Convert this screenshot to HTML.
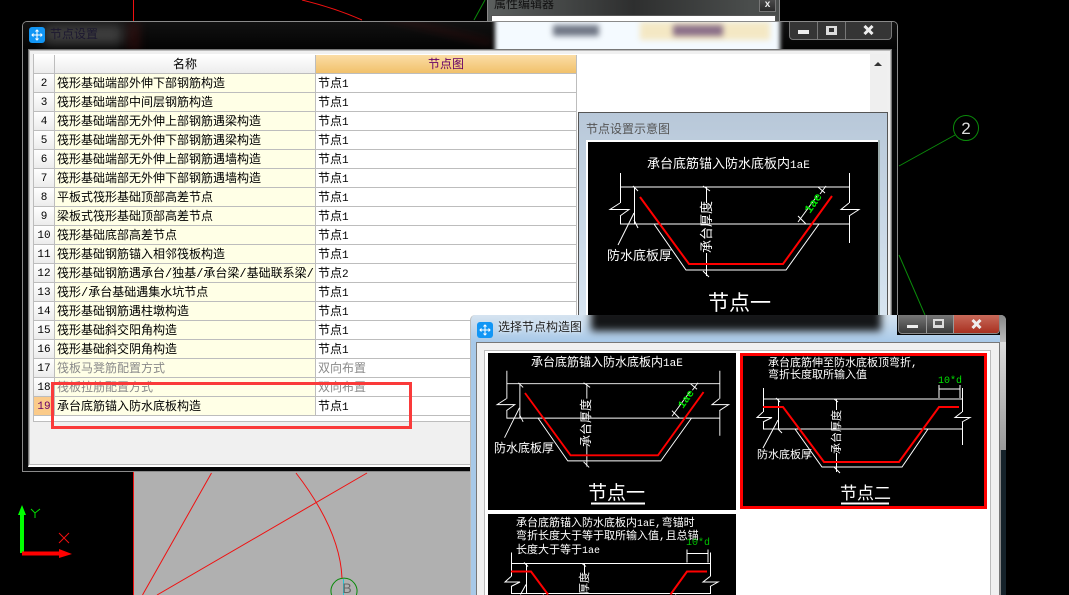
<!DOCTYPE html>
<html><head><meta charset="utf-8">
<style>
html,body{margin:0;padding:0;background:#000;width:1069px;height:595px;overflow:hidden}
#p{position:relative;width:1069px;height:595px;overflow:hidden;background:#000;font:12px/18px "Liberation Mono","WenQuanYi Zen Hei","Noto Sans CJK SC",monospace;color:#000}
.a{position:absolute;box-sizing:border-box}
table{border-collapse:separate;border-spacing:0;table-layout:fixed;font-size:12px}
td{height:19px;box-sizing:border-box;padding:2px 2px 0;border-right:1px solid #bdbdbd;border-bottom:1px solid #bdbdbd;white-space:nowrap;overflow:hidden;line-height:16px;background:#fff;font-family:"Liberation Mono","WenQuanYi Zen Hei","Noto Sans CJK SC",monospace}
td:first-child{text-align:center;background:linear-gradient(#fff,#ececec);padding:2px 0 0;font-size:11px}
td:nth-child(2){background:#ffffe6}
tr.g td:nth-child(n+2){color:#8a8a8a}
i{font:11px/10px "Liberation Mono",monospace}
.h td{text-align:center;background:linear-gradient(#fff,#ececec)!important}
.h td:last-child{background:linear-gradient(#fbdda6,#f1c16b)!important;color:#660066}
svg text{font-family:"Liberation Mono","WenQuanYi Zen Hei","Noto Sans CJK SC",monospace;fill:#fff}
.ic{width:16px;height:16px;border-radius:3px;background:#1296f5}
.btn{background:linear-gradient(#4a4a4a,#2a2a2a);border:1px solid #777;border-top:0}
</style></head><body><div id="p">

<svg class="a" style="left:0;top:0" width="1069" height="595" viewBox="0 0 1069 595">
<rect x="134" y="472" width="340" height="123" fill="#b0b0b0"/>
<g fill="none" stroke="#f01010" stroke-width="1">
<path d="M133.500 0V21M133.500 472V595"/>
<path d="M302 0Q335 8 362 20"/>
<path d="M296 473Q340 530 342 578"/>
<path d="M211.500 473L142.500 595M367 473L157 595"/>
</g>
<path d="M485 0L474 20" stroke="#0a8a0a"/>
<path d="M899 166L955 135M899 255L925 315" stroke="#0a8a0a" fill="none"/>
<circle cx="966" cy="128" r="12.500" fill="none" stroke="#0a8a0a"/>
<text x="966" y="134" font-size="17" text-anchor="middle" style="fill:#ddd;font-family:'Liberation Sans',sans-serif">2</text>
<path d="M331.600 595A13 13 0 1 1 356.400 595" fill="none" stroke="#0a8a0a"/>
<path d="M343.500 579V595" stroke="#20c8d8"/>
<text x="347" y="593" font-size="14" text-anchor="middle" style="fill:#666;font-family:'Liberation Sans',sans-serif">B</text>
<path d="M22 553V513" stroke="#00ff00" stroke-width="4"/>
<path d="M18 515L22 505L26 515Z" fill="#00ff00"/>
<path d="M22 553.500H62" stroke="#ff0000" stroke-width="4"/>
<path d="M59 549L72 554L59 558Z" fill="#ff0000"/>
<path d="M31 509L35 513L40 509M35 513V518" stroke="#00e000" fill="none"/>
<path d="M59 533L69 543M69 533L59 543" stroke="#f01010"/>
</svg>

<!-- attribute editor behind -->
<div class="a" style="left:487px;top:0;width:293px;height:22px;overflow:hidden;background:linear-gradient(90deg,#5b5f5e,#2e2f2f 50%,#4a4d4c 90%);border-left:1px solid #888;border-right:1px solid #888">
<div class="a" style="left:6px;top:-4px;color:#111;white-space:nowrap;font-size:12px">属性编辑器</div>
<div class="a btn" style="left:271px;top:0;width:17px;height:12px;color:#eee;text-align:center;font:bold 10px/10px 'Liberation Sans',sans-serif">x</div>
<div class="a" style="left:3px;top:15px;width:285px;height:7px;background:#fff;border:1px solid #555"></div>
</div>

<!-- main window -->
<div class="a" style="left:22px;top:21px;width:876px;height:451px;background:#060708;border:1px solid #8a8a8a;border-radius:5px 5px 0 0;overflow:hidden">
 <div class="a" style="left:0;top:0;width:874px;height:27px;overflow:hidden;background:linear-gradient(#111,#030303)">
  <div class="a" style="left:20px;top:3px;width:80px;height:20px;background:rgba(255,255,255,.22);filter:blur(6px)"></div>
  <div class="a" style="left:106px;top:0;width:10px;height:30px;background:rgba(170,30,30,.22);filter:blur(5px)"></div>
  <div class="a" style="left:360px;top:5px;width:110px;height:5px;background:rgba(160,30,30,.18);filter:blur(4px);transform:rotate(14deg)"></div>
  <div class="a" style="left:472px;top:-8px;width:285px;height:50px;background:#f4faff;filter:blur(2px)"></div>
  <div class="a" style="left:617px;top:0;width:130px;height:18px;background:#f4e8c4;filter:blur(3px)"></div>
  <div class="a" style="left:530px;top:3px;width:46px;height:11px;background:#6f7685;filter:blur(3px)"></div>
  <div class="a" style="left:650px;top:3px;width:50px;height:11px;background:#8a6f88;filter:blur(3px)"></div>
 </div>
 <div class="a ic" style="left:6px;top:5px"></div>
 <svg class="a" style="left:6px;top:5px" width="16" height="16"><path d="M8 3V13M3 8H13M6.500 4.500L8 3L9.500 4.500M6.500 11.500L8 13L9.500 11.500M4.500 6.500L3 8L4.500 9.500M11.500 6.500L13 8L11.500 9.500" stroke="#fff" fill="none"/></svg>
 <div class="a" style="left:27px;top:4px;color:#1c1830;white-space:nowrap">节点设置</div>
 <!-- title buttons -->
 <div class="a" style="left:766px;top:-1px;width:103px;height:19px;background:#353535;border:1px solid #777;border-top:0;border-radius:0 0 4px 4px">
  <div class="a" style="left:27px;top:0;width:1px;height:18px;background:#777"></div>
  <div class="a" style="left:55px;top:0;width:1px;height:18px;background:#777"></div>
  <div class="a" style="left:8px;top:9px;width:11px;height:4px;background:#eee"></div>
  <div class="a" style="left:36px;top:5px;width:11px;height:9px;border:2px solid #ddd;border-width:2px 3px 3px;background:#333"></div>
  <svg class="a" style="left:73px;top:4px" width="11" height="10"><path d="M1.500 1L9.500 9M9.500 1L1.500 9" stroke="#eee" stroke-width="3" fill="none"/></svg>
 </div>
 <!-- client -->
 <div class="a" style="left:5px;top:27px;width:864px;height:418px;background:#f0f0f0;border:1px solid #777;border-bottom:2px solid #fff;box-shadow:0 0 0 1px #bbb inset">
  <div class="a" style="left:4px;top:4px;width:854px;height:368px;background:#fff;border:1px solid #bdbdbd;border-top:0"></div>
  <div class="a" style="left:841px;top:4px;width:17px;height:260px;background:#efefef"></div>
  <div class="a" style="left:845px;top:12px;width:0;height:0;border:4px solid transparent;border-bottom:4px solid #333;border-top:0"></div>
  <table class="a" style="left:5px;top:5px;width:543px">
   <colgroup><col style="width:21px"><col style="width:261px"><col style="width:261px"></colgroup>
   <tr class="h"><td></td><td>名称</td><td>节点图</td></tr>
   <tr><td>2</td><td>筏形基础端部外伸下部钢筋构造</td><td>节点<i>1</i></td></tr>
   <tr><td>3</td><td>筏形基础端部中间层钢筋构造</td><td>节点<i>1</i></td></tr>
   <tr><td>4</td><td>筏形基础端部无外伸上部钢筋遇梁构造</td><td>节点<i>1</i></td></tr>
   <tr><td>5</td><td>筏形基础端部无外伸下部钢筋遇梁构造</td><td>节点<i>1</i></td></tr>
   <tr><td>6</td><td>筏形基础端部无外伸上部钢筋遇墙构造</td><td>节点<i>1</i></td></tr>
   <tr><td>7</td><td>筏形基础端部无外伸下部钢筋遇墙构造</td><td>节点<i>1</i></td></tr>
   <tr><td>8</td><td>平板式筏形基础顶部高差节点</td><td>节点<i>1</i></td></tr>
   <tr><td>9</td><td>梁板式筏形基础顶部高差节点</td><td>节点<i>1</i></td></tr>
   <tr><td>10</td><td>筏形基础底部高差节点</td><td>节点<i>1</i></td></tr>
   <tr><td>11</td><td>筏形基础钢筋锚入相邻筏板构造</td><td>节点<i>1</i></td></tr>
   <tr><td>12</td><td>筏形基础钢筋遇承台/独基/承台梁/基础联系梁/</td><td>节点<i>2</i></td></tr>
   <tr><td>13</td><td>筏形/承台基础遇集水坑节点</td><td>节点<i>1</i></td></tr>
   <tr><td>14</td><td>筏形基础钢筋遇柱墩构造</td><td>节点<i>1</i></td></tr>
   <tr><td>15</td><td>筏形基础斜交阳角构造</td><td>节点<i>1</i></td></tr>
   <tr><td>16</td><td>筏形基础斜交阴角构造</td><td>节点<i>1</i></td></tr>
   <tr class="g"><td>17</td><td>筏板马凳筋配置方式</td><td>双向布置</td></tr>
   <tr class="g"><td>18</td><td>筏板拉筋配置方式</td><td>双向布置</td></tr>
   <tr><td style="background:#fbcb8a;color:#660066">19</td><td>承台底筋锚入防水底板构造</td><td>节点<i>1</i></td></tr>
  </table>
 </div>
</div>

<!-- sketch window -->
<div class="a" style="left:578px;top:112px;width:310px;height:204px;background:linear-gradient(#b8c8d9,#d8e5f1);border:1px solid #555;border-bottom:0">
 <div class="a" style="left:7px;top:8px;color:#555;white-space:nowrap">节点设置示意图</div>
 <div class="a" style="left:7px;top:27px;width:292px;height:177px;background:#000;border:2px solid #fff;border-width:2px 0 0 2px;box-shadow:2px 0 0 #9aa"></div>
</div>

<!-- red annotation -->
<div class="a" style="left:51px;top:382px;width:361px;height:47px;border:3px solid #fa3a3a"></div>

<!-- front window -->
<div class="a" style="left:470px;top:315px;width:536px;height:280px;background:linear-gradient(#d6e4f0,#a8c9e8 27px);border-left:1px solid #bbb;border-radius:5px 5px 0 0;overflow:hidden">
 <div class="a" style="left:120px;top:-8px;width:290px;height:24px;background:rgba(0,0,0,.9);filter:blur(4px)"></div>
 <div class="a" style="left:426px;top:0;width:104px;height:20px;background:#050505"></div>
 <div class="a" style="left:529px;top:0;width:6px;height:27px;background:linear-gradient(#888,#bbb)"></div>
 <div class="a ic" style="left:6px;top:7px"></div>
 <svg class="a" style="left:6px;top:7px" width="16" height="16"><path d="M8 3V13M3 8H13M6.500 4.500L8 3L9.500 4.500M6.500 11.500L8 13L9.500 11.500M4.500 6.500L3 8L4.500 9.500M11.500 6.500L13 8L11.500 9.500" stroke="#fff" fill="none"/></svg>
 <div class="a" style="left:27px;top:4px;color:#222;white-space:nowrap;text-shadow:0 0 4px #fff">选择节点构造图</div>
 <div class="a" style="left:427px;top:0;width:102px;height:19px;background:linear-gradient(#777,#3a3a3a);border:1px solid #888;border-top:0;border-radius:0 0 4px 4px;overflow:hidden">
  <div class="a" style="left:27px;top:0;width:1px;height:18px;background:#999"></div>
  <div class="a" style="left:54px;top:0;width:47px;height:18px;background:linear-gradient(#c86a5a,#a83020);border-left:1px solid #999"></div>
  <div class="a" style="left:8px;top:10px;width:11px;height:3px;background:#eee"></div>
  <div class="a" style="left:34px;top:4px;width:11px;height:9px;border:2px solid #ddd;border-bottom-width:3px"></div>
  <svg class="a" style="left:72px;top:4px" width="11" height="10"><path d="M1.500 1L9.500 9M9.500 1L1.500 9" stroke="#eee" stroke-width="3" fill="none"/></svg>
 </div>
 <div class="a" style="left:5px;top:27px;width:524px;height:253px;background:#f0f0f0;border:1px solid #777;border-bottom:0"></div>
 <div class="a" style="left:13px;top:35px;width:507px;height:245px;background:#fff;border:1px solid #bbb;border-bottom:0"></div>
 <div class="a" style="left:529px;top:27px;width:6px;height:108px;background:linear-gradient(#ddd,#999)"></div>
 <div class="a" style="left:529px;top:135px;width:6px;height:145px;background:#15222a;border-left:1px solid #888"></div>
</div>

<svg class="a" style="left:0;top:0" width="1069" height="595" viewBox="0 0 1069 595">
<defs>
<clipPath id="cA"><rect x="588" y="142" width="290" height="173"/></clipPath>
<g id="d1" fill="none">
 <g stroke="#fff" stroke-width="1">
 <path d="M620 187H849M620 224H849M620.500 173V203M620.500 216V224M849.500 173V203M849.500 216V243"/>
 <path d="M620 203L610 209.500H629L620 216M849 203L841 209.500H859L849 216"/>
 <path d="M634.500 187V224M633 186L638 191M634 220L638 228M634 213L618 245"/>
 <path d="M706.500 187V203M706.500 253V276M703 186L710 191M703 271L709 277"/>
 <path d="M654 224L686 270H786L819 224"/>
 <path d="M798 216L806 224M798 222L817 196M818 187L825 193M820 194L826 186"/>
 </g>
 <path d="M640 197L689 264H783L832 196" stroke="#ff0000" stroke-width="2"/>
</g>
<g id="d2" fill="none">
 <g stroke="#fff" stroke-width="1">
 <path d="M763 399H962M763 429H962M763.500 388V412M763.500 422V429M962.500 388V412M962.500 422V445"/>
 <path d="M763 412L757 417.500H772L763 422M962 412L955 417.500H970L962 422"/>
 <path d="M778.500 399V429M776 398L780 402M778 429L782 433M778 420L763 448"/>
 <path d="M836.500 399V410M836.500 453V472M834 399L838 402M834 467L840 473"/>
 <path d="M795 429L822 467H902L928 429"/>
 <path d="M939 385V398M960 385V398M939 389H960"/>
 </g>
 <path d="M763 407H783L824 462H899L939 407H959" stroke="#ff0000" stroke-width="2"/>
</g>
</defs>

<g clip-path="url(#cA)">
 <use href="#d1"/>
 <text x="647" y="168" font-size="13">承台底筋锚入防水底板内<tspan font-size="11">1aE</tspan></text>
 <text x="607" y="260" font-size="13">防水底板厚</text>
 <text transform="translate(711 253) rotate(-90)" font-size="13">承台厚度</text>
 <text transform="translate(810 214) rotate(-55)" font-size="12" style="fill:#00e000;font-weight:bold">1ae</text>
 <text x="708" y="310" font-size="21" style="font-family:'Noto Sans CJK SC',sans-serif">节点一</text>
</g>

<rect x="488" y="353" width="248" height="157" fill="#000"/>
<use href="#d1" transform="matrix(.93 0 0 .93 -70.200 209.800)"/>
<text x="531" y="366" font-size="12">承台底筋锚入防水底板内<tspan font-size="11">1aE</tspan></text>
<text x="494" y="452" font-size="12">防水底板厚</text>
<text transform="translate(590 447) rotate(-90)" font-size="12">承台厚度</text>
<text transform="translate(683 409) rotate(-55)" font-size="11" style="fill:#00e000;font-weight:bold">1ae</text>
<text x="588" y="499" font-size="19" style="font-family:'Noto Sans CJK SC',sans-serif">节点一</text>
<path d="M591 503.500H645" stroke="#fff" stroke-width="2"/>

<rect x="741.500" y="354.500" width="244" height="153" fill="#000" stroke="#ff0000" stroke-width="3"/>
<use href="#d2"/>
<text x="768" y="366" font-size="11">承台底筋伸至防水底板顶弯折,</text>
<text x="768" y="378" font-size="11">弯折长度取所输入值</text>
<text x="938" y="383" font-size="10" style="fill:#00e000">10*d</text>
<text x="757" y="458" font-size="11">防水底板厚</text>
<text transform="translate(840 454) rotate(-90)" font-size="11">承台厚度</text>
<text x="840" y="499" font-size="17" style="font-family:'Noto Sans CJK SC',sans-serif">节点二</text>
<path d="M841 503.500H889" stroke="#fff" stroke-width="2"/>

<rect x="488" y="514" width="248" height="81" fill="#000"/>
<g fill="none">
 <path stroke="#fff" d="M511 563.500H710M511 593.500H710M511.500 552.500V576.500M511.500 586.500V593.500M710.500 552.500V576.500M710.500 586.500V594M511 576.500L505 582H520L511 586.500M710 576.500L703 582H718L710 586.500M526.500 563.500V593.500M524 562.500L528 566.500M526 584.500L520.500 594.500M584.500 563.500V574.500M582 563.500L586 566.500M543 593.500L543.500 594.500M676 593.500L675.500 594.500M687 549.500V562.500M708 549.500V562.500M687 553.500H708"/>
 <path stroke="#ff0000" stroke-width="2" d="M548 594.500L531 571.500H511M670.500 594.500L687 571.500H707"/>
</g>
<text x="516" y="526" font-size="11">承台底筋锚入防水底板内<tspan font-size="10">1aE</tspan>,弯锚时</text>
<text x="516" y="539" font-size="11">弯折长度大于等于取所输入值,且总锚</text>
<text x="516" y="553" font-size="11">长度大于等于<tspan font-size="10">1ae</tspan></text>
<text x="686" y="545" font-size="10" style="fill:#00c000">10*d</text>
<text transform="translate(588 594) rotate(-90)" font-size="11">厚度</text>
</svg>
</div></body></html>
